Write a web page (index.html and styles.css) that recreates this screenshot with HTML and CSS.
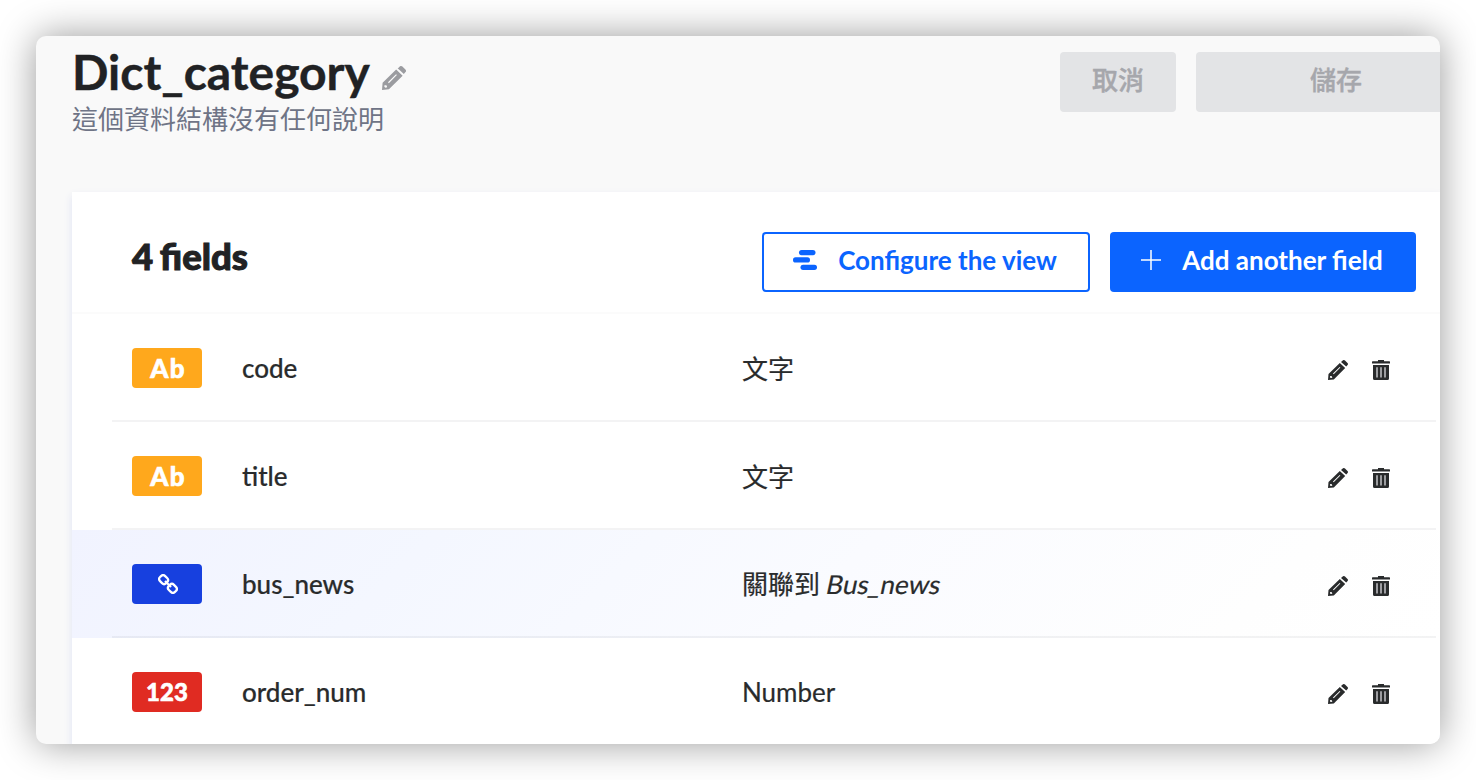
FILE: index.html
```html
<!DOCTYPE html>
<html lang="zh-Hant">
<head>
<meta charset="utf-8">
<title>Dict_category</title>
<link rel="stylesheet" href="styles.css">
</head>
<body>
<svg width="0" height="0" class="defs">
  <symbol id="pencil" viewBox="0 0 20 20">
    <path fill="currentColor" fill-rule="evenodd" d="M13.600 1.600 15 .3Q16 -.4 17 .5L19.500 3Q20.500 4 19.600 5L18.200 6.600 13 1.900ZM11.800 2.900 17.200 8.100 5.800 19.400 0 20 .5 14ZM11.700 6.900 5 13.600 5.700 14.300 12.400 7.600ZM2.200 15.900 1.900 17.200 2.800 18.100 4.300 17.700 3.900 16.200Z"/>
  </symbol>
  <symbol id="trash" viewBox="0 0 18 20">
    <path fill="currentColor" d="M6 0H12V1.200H17.400Q18 1.300 18 2V3.500H0V2Q0 1.300.6 1.200H6ZM1 5H17V18.500Q17 20 15.500 20H2.500Q1 20 1 18.500Z"/>
    <path stroke="#c4c5c8" stroke-width="1.500" d="M5 7.200V17.500M9 7.200V17.500M13 7.200V17.500"/>
  </symbol>
</svg>
<main class="window">
  <header class="page-header">
    <div class="heading">
      <div class="title-line">
        <h1>Dict_category</h1>
        <svg class="title-pencil"><use href="#pencil"/></svg>
      </div>
      <p class="subtitle">這個資料結構沒有任何說明</p>
    </div>
    <div class="header-actions">
      <button class="btn disabled cancel"><span>取消</span></button>
      <button class="btn disabled save"><span>儲存</span></button>
    </div>
  </header>
  <section class="card">
    <div class="card-header">
      <h2>4 fields</h2>
      <div class="card-actions">
        <button class="btn outline">
          <svg width="24" height="20" viewBox="0 0 24 20"><g fill="currentColor"><rect x="6" width="16.500" height="5.200" rx="2.600"/><rect y="7.300" width="17" height="5.200" rx="2.600"/><rect x="7.500" y="14.700" width="16.500" height="5.200" rx="2.600"/></g></svg>
          <span>Configure the view</span>
        </button>
        <button class="btn primary">
          <svg width="20" height="20" viewBox="0 0 20 20"><path stroke="currentColor" stroke-width="1.500" d="M0 10H20M10 0V20"/></svg>
          <span>Add another field</span>
        </button>
      </div>
    </div>
    <ul class="fields">
      <li class="row">
        <span class="badge text">Ab</span><span class="name">code</span><span class="type cjk">文字</span>
        <span class="tools"><svg class="pen"><use href="#pencil"/></svg><svg class="bin"><use href="#trash"/></svg></span>
      </li>
      <li class="row">
        <span class="badge text">Ab</span><span class="name">title</span><span class="type cjk">文字</span>
        <span class="tools"><svg class="pen"><use href="#pencil"/></svg><svg class="bin"><use href="#trash"/></svg></span>
      </li>
      <li class="row relation">
        <span class="badge link"><svg width="20" height="20" viewBox="0 0 20 20"><g fill="none" stroke="#fff" stroke-width="2.300"><rect x="-3.600" y="-4.300" width="7.200" height="8.600" rx="2.900" transform="translate(5.600 5.600) rotate(-45)"/><rect x="-3.600" y="-4.300" width="7.200" height="8.600" rx="2.900" transform="translate(14.400 14.400) rotate(-45)"/><path d="M7 7 13 13"/></g></svg></span><span class="name">bus_news</span><span class="type">關聯到 <em>Bus_news</em></span>
        <span class="tools"><svg class="pen"><use href="#pencil"/></svg><svg class="bin"><use href="#trash"/></svg></span>
      </li>
      <li class="row">
        <span class="badge number">123</span><span class="name">order_num</span><span class="type">Number</span>
        <span class="tools"><svg class="pen"><use href="#pencil"/></svg><svg class="bin"><use href="#trash"/></svg></span>
      </li>
    </ul>
  </section>
</main>
</body>
</html>
```
FILE: styles.css
```css
* { box-sizing: border-box; }
body {
  margin: 0;
  padding: 36px;
  height: 780px;
  overflow: hidden;
  background: #fff;
  font-family: Lato, "Noto Sans CJK TC", sans-serif;
  color: #292b2c;
}
.defs { display: none; }
h1, h2, p, ul { margin: 0; padding: 0; }
svg { display: block; flex: none; }
.window {
  width: 1404px;
  height: 708px;
  border-radius: 10px;
  overflow: hidden;
  background: #f9f9f9;
  box-shadow: 0 0 38px rgba(0, 0, 0, .4);
}
.page-header {
  display: flex;
  justify-content: space-between;
  height: 156px;
  padding: 6px 0 0 36px;
}
.title-line { display: flex; gap: 12px; height: 62px; }
h1 {
  font-size: 48px;
  line-height: 60px;
  font-weight: 700;
  color: #212224;
  white-space: nowrap;
  -webkit-text-stroke: .4px;
}
.title-pencil { width: 24px; height: 24px; margin-top: 24px; color: #9b9ca0; }
.subtitle { font-size: 26px; line-height: 30px; color: #6f7486; }
.header-actions { display: flex; gap: 20px; padding-top: 10px; margin-right: -36px; }
.btn {
  display: flex;
  align-items: center;
  justify-content: center;
  height: 60px;
  padding: 0 30px;
  border: 0;
  border-radius: 4px;
  font: 700 26px/36px Lato, "Noto Sans CJK TC", sans-serif;
  white-space: nowrap;
}
.disabled { background: #e3e4e6; color: #a6a7ac; font-weight: 500; -webkit-text-stroke: .4px; }
.cancel { width: 116px; }
.save { width: 280px; }
.card {
  margin-left: 36px;
  background: #fff;
  box-shadow: 0 4px 8px #dfe3f3;
}
.card-header {
  display: flex;
  align-items: flex-start;
  justify-content: space-between;
  height: 122px;
  padding: 40px 24px 0 60px;
  border-bottom: 2px solid #fbfbfb;
}
h2 {
  font-size: 36.500px;
  line-height: 48px;
  font-weight: 900;
  word-spacing: -2px;
  color: #212224;
  -webkit-text-stroke: 1px;
}
.card-actions { display: flex; gap: 20px; }
.outline { width: 328px; border: 2px solid #0b64ff; background: #fff; color: #0b64ff; gap: 20px; }
.primary { width: 306px; background: #0b64ff; color: #fff; gap: 20px; }
.btn svg { margin: -4px 1px 0 -2px; }
.btn span { margin-top: -4px; }
.fields { list-style: none; }
.row {
  display: grid;
  grid-template-columns: 110px 500px 1fr auto;
  align-items: center;
  height: 108px;
  padding: 0 50px 0 60px;
  background: linear-gradient(#f3f3f4, #f3f3f4) 40px 100% / 1324px 2px no-repeat;
}
.row:last-child { background: none; }
.relation {
  background:
    linear-gradient(rgba(14, 22, 34, .05), rgba(14, 22, 34, .05)) 40px 100% / 1324px 2px no-repeat,
    linear-gradient(135deg, #f1f3ff 0%, #f4f7ff 25%, #fafbff 55%, #fefefe 85%, #fff 100%);
}
.badge {
  display: flex;
  align-items: center;
  justify-content: center;
  width: 70px;
  height: 40px;
  border-radius: 4px;
  color: #fff;
  font-size: 26px;
  line-height: 38px;
  font-weight: 900;
  -webkit-text-stroke: .6px;
}
.text { background: #ffa81c; letter-spacing: 1.2px; padding-left: 2px; }
.link { background: #1740df; padding-left: 2px; }
.number { background: #e02b22; font-size: 24px; }
.name, .type { font-size: 26px; line-height: 36px; font-weight: 500; }
.type { font-weight: 400; }
.name, .type { -webkit-text-stroke: .2px; }
.cjk { padding-top: 2px; }
.type em { display: inline-block; font-style: normal; transform: skewX(-12deg); }
.tools { display: flex; gap: 24px; padding-top: 4px; }
.pen { width: 20px; height: 20px; }
.bin { width: 18px; height: 20px; }
.tools { color: #292b2c; }
```
